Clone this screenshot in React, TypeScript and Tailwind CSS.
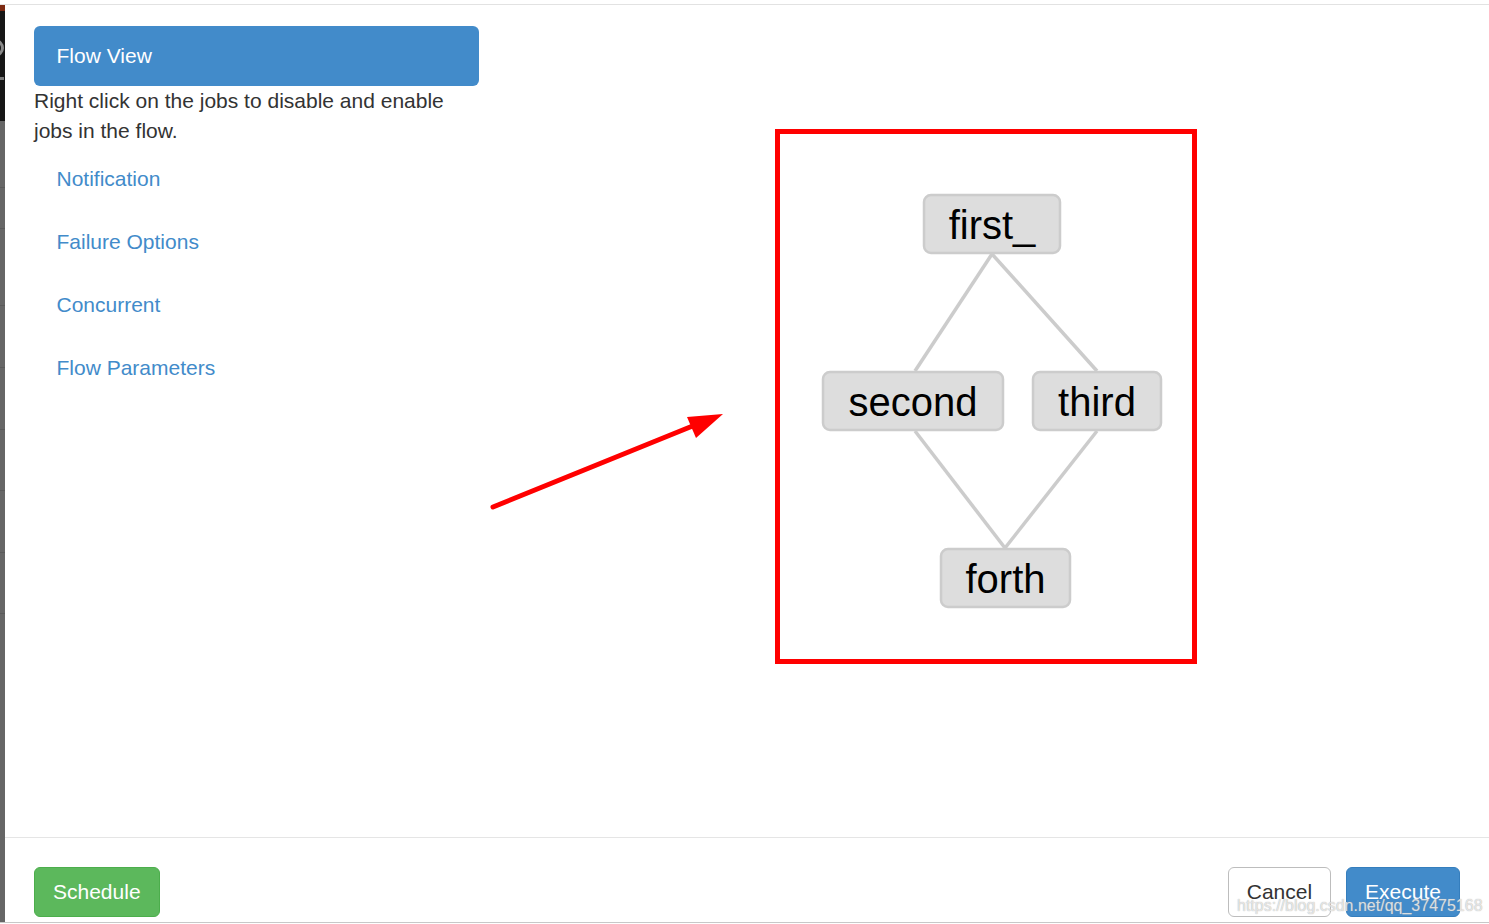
import React from "react";

const navItems = ["Notification", "Failure Options", "Concurrent", "Flow Parameters"];

function FlowGraph() {
  const nodes = [
    { label: "first_", x: 143, y: 60, w: 138 },
    { label: "second", x: 42, y: 237, w: 182 },
    { label: "third", x: 252, y: 237, w: 130 },
    { label: "forth", x: 160, y: 414, w: 131 },
  ];
  const edges = [
    [212, 120, 135, 237],
    [212, 120, 317, 237],
    [135, 297, 225, 414],
    [317, 297, 225, 414],
  ];
  return (
    <svg width="412" height="525" viewBox="0 0 412 525" className="block">
      {edges.map((e, i) => (
        <line key={i} x1={e[0]} y1={e[1]} x2={e[2]} y2={e[3]} stroke="#cccccc" strokeWidth="3.5" />
      ))}
      {nodes.map((n) => (
        <g key={n.label}>
          <rect
            x={n.x + 1}
            y={n.y + 1}
            width={n.w - 2}
            height={58}
            rx="7"
            fill="#dddddd"
            stroke="#cccccc"
            strokeWidth="2.5"
          />
          <text
            x={n.x + n.w / 2}
            y={n.y + 30 + 15}
            textAnchor="middle"
            fontSize="40"
            fontFamily="'Liberation Sans', Arial, sans-serif"
            fill="#000000"
          >
            {n.label}
          </text>
        </g>
      ))}
    </svg>
  );
}

export default function App() {
  return (
    <div className="relative w-[1489px] h-[924px] bg-white flex flex-col overflow-hidden font-['Liberation_Sans',Arial,sans-serif] text-[#333333]">
      {/* top edge */}
      <div className="h-[5px] shrink-0 bg-white border-b border-[#e2e2e2]" />
      <div className="flex flex-1 min-h-0">
        {/* left sliver of background page */}
        <div className="w-[5px] shrink-0 flex flex-col">
          <div className="h-[6px] bg-[#7d2a12]" />
          <div className="h-[110px] bg-[#161616] relative overflow-hidden">
            <div className="absolute left-[-14px] top-[28px] w-[18px] h-[18px] rounded-full border-[3px] border-[#8a8a8a]" />
            <div className="absolute left-[-6px] top-[66px] w-[10px] h-[3px] bg-[#7a7a7a]" />
          </div>
          <div className="flex-1 bg-[#666666] flex flex-col">
            <div className="h-[67px] border-b border-[#5a5a5a]" />
            <div className="h-[41px] border-b border-[#5a5a5a]" />
            <div className="h-[77px] border-b border-[#5a5a5a]" />
            <div className="h-[62px] border-b border-[#5a5a5a]" />
            <div className="h-[62px] border-b border-[#5a5a5a]" />
            <div className="h-[61px] border-b border-[#5a5a5a]" />
            <div className="h-[62px] border-b border-[#5a5a5a]" />
            <div className="h-[61px] border-b border-[#5a5a5a]" />
            <div className="flex-1" />
          </div>
        </div>

        {/* modal */}
        <div className="flex-1 flex flex-col min-w-0">
          <div className="flex-1 flex items-start pl-[29px] pt-[21px] min-h-0">
            <div className="w-[445px] shrink-0">
              <div className="h-[60px] rounded-[6px] bg-[#428bca] px-[22.5px] flex items-center text-white text-[21px] leading-[30px]">
                Flow View
              </div>
              <p className="text-[21px] leading-[30px] m-0">
                Right click on the jobs to disable and enable jobs in the flow.
              </p>
              <ul className="mt-[3px] flex flex-col gap-[3px]">
                {navItems.map((t) => (
                  <li key={t} className="px-[22.5px] py-[15px] text-[21px] leading-[30px] text-[#428bca]">
                    {t}
                  </li>
                ))}
              </ul>
            </div>
            <div className="ml-[296px] mt-[103px] w-[422px] h-[535px] border-[5px] border-[#ff0000] bg-white shrink-0">
              <FlowGraph />
            </div>
          </div>

          {/* footer */}
          <div className="h-[85px] shrink-0 border-t border-[#e5e5e5] flex items-start justify-between pl-[29px] pr-[29px] pt-[29px]">
            <button className="h-[50px] px-[18px] rounded-[6px] bg-[#5cb85c] border border-[#4cae4c] text-white text-[21px] leading-[30px]">
              Schedule
            </button>
            <div className="flex gap-[15px]">
              <button className="h-[50px] px-[18px] rounded-[6px] bg-white border border-[#bdbdbd] text-[#333333] text-[21px] leading-[30px]">
                Cancel
              </button>
              <button className="h-[50px] px-[18px] rounded-[6px] bg-[#428bca] border border-[#357ebd] text-white text-[21px] leading-[30px]">
                Execute
              </button>
            </div>
          </div>
        </div>
      </div>
      {/* bottom edge */}
      <div className="h-[2px] shrink-0 border-t border-[#c8c8c8] bg-white" />

      {/* annotation arrow */}
      <svg className="absolute left-0 top-0 pointer-events-none" width="1489" height="924">
        <line x1="493" y1="507" x2="700" y2="423" stroke="#ff0000" strokeWidth="5" strokeLinecap="round" />
        <polygon points="723,414 687,417 696,438" fill="#ff0000" />
      </svg>

      {/* watermark */}
      <div className="absolute left-[1237px] top-[895px] text-[16px] leading-[22px] text-white/70 [text-shadow:0_0_1px_#9a9a9a] pointer-events-none whitespace-nowrap">
        https://blog.csdn.net/qq_37475168
      </div>
    </div>
  );
}
